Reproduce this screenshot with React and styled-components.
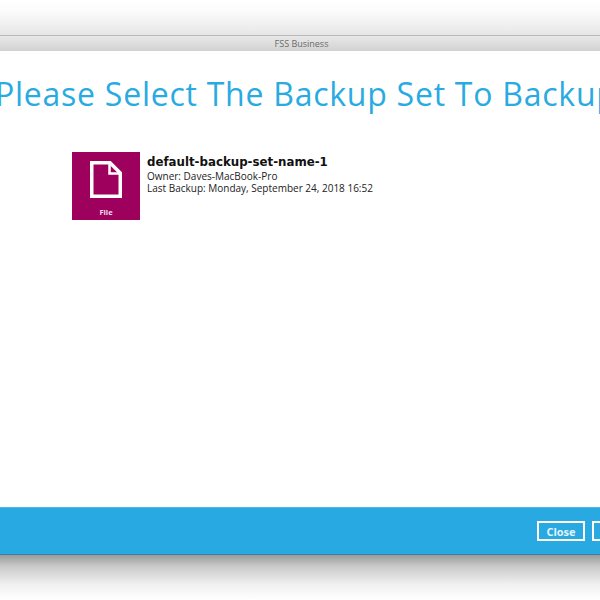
import React from 'react';
import styled, { createGlobalStyle } from 'styled-components';

const GlobalStyle = createGlobalStyle`
  html, body {
    margin: 0;
    padding: 0;
    background: #fff;
    overflow: hidden;
  }
`;

const Page = styled.div`
  width: 600px;
  height: 600px;
  overflow: hidden;
  display: flex;
  flex-direction: column;
  font-family: "Open Sans", "DejaVu Sans", sans-serif;
`;

const TopShadow = styled.div`
  height: 35px;
  background: linear-gradient(to bottom, #fff 0%, #fbfbfb 35%, #e6e6e6 100%);
  border-bottom: 1px solid #b9b9b9;
`;

const TitleBar = styled.div`
  height: 15px;
  line-height: 15px;
  padding-left: 3px;
  text-align: center;
  font-size: 9px;
  color: #6a6a6a;
  background: linear-gradient(to bottom, #e8e8e8, #d2d2d2);
`;

const Content = styled.div`
  height: 456px;
  background: #fff;
  overflow: hidden;
`;

const Heading = styled.h1`
  margin: 20px 0 0 -5px;
  font-size: 32px;
  line-height: 46px;
  font-weight: 400;
  letter-spacing: 0.75px;
  white-space: nowrap;
  color: #29abe2;
`;

const BackupSet = styled.div`
  display: flex;
  gap: 7px;
  margin: 35px 0 0 72px;
`;

const SetIcon = styled.div`
  width: 68px;
  height: 68px;
  background: #9e005d;
  display: flex;
  flex-direction: column;
  align-items: center;
  padding-top: 9px;
  box-sizing: border-box;
`;

const SetIconLabel = styled.span`
  margin-top: 9px;
  font-size: 7.5px;
  line-height: 10px;
  font-weight: 700;
  color: #f3dfeb;
`;

const SetInfo = styled.div`
  display: flex;
  flex-direction: column;
  padding-top: 3px;
`;

const SetName = styled.div`
  font-family: "DejaVu Sans", sans-serif;
  font-size: 11.8px;
  line-height: 15px;
  font-weight: 700;
  color: #111;
`;

const SetMeta = styled.div`
  font-size: 10px;
  line-height: 12px;
  color: #222;
`;

const Footer = styled.div`
  height: 48px;
  box-sizing: border-box;
  display: flex;
  align-items: center;
  gap: 7px;
  background: #29a9e1;
  border-top: 1px solid #4db8e8;
  border-bottom: 1px solid #3d7f9e;
`;

const FooterButton = styled.button`
  flex: 0 0 auto;
  width: 48px;
  height: 20px;
  padding: 0;
  border: 2px solid #fff;
  background: transparent;
  color: #e4f4fb;
  font-family: inherit;
  font-size: 11px;
  font-weight: 700;
  margin-left: ${({ $first }) => ($first ? 'auto' : '0')};
  margin-right: ${({ $clipped }) => ($clipped ? '-40px' : '0')};
`;

const BottomShadow = styled.div`
  flex: 1;
  background: linear-gradient(to bottom, #9a9a9a 0%, #c9c9c9 25%, #f0f0f0 65%, #fff 100%);
`;

const FileGlyph = () => (
  <svg width="32" height="37" viewBox="0 0 32 37" fill="none">
    <path d="M1.75 1.75H20L30.25 12V35.25H1.75Z" stroke="#fff" strokeWidth="3.5" />
    <path d="M19.5 2V12.5H30" stroke="#fff" strokeWidth="2.5" />
  </svg>
);

const App = () => (
  <Page>
    <GlobalStyle />
    <TopShadow />
    <TitleBar>FSS Business</TitleBar>
    <Content>
      <Heading>Please Select The Backup Set To Backup</Heading>
      <BackupSet>
        <SetIcon>
          <FileGlyph />
          <SetIconLabel>File</SetIconLabel>
        </SetIcon>
        <SetInfo>
          <SetName>default-backup-set-name-1</SetName>
          <SetMeta>Owner: Daves-MacBook-Pro</SetMeta>
          <SetMeta>Last Backup: Monday, September 24, 2018 16:52</SetMeta>
        </SetInfo>
      </BackupSet>
    </Content>
    <Footer>
      <FooterButton $first>Close</FooterButton>
      <FooterButton $clipped>Next</FooterButton>
    </Footer>
    <BottomShadow />
  </Page>
);

export default App;
